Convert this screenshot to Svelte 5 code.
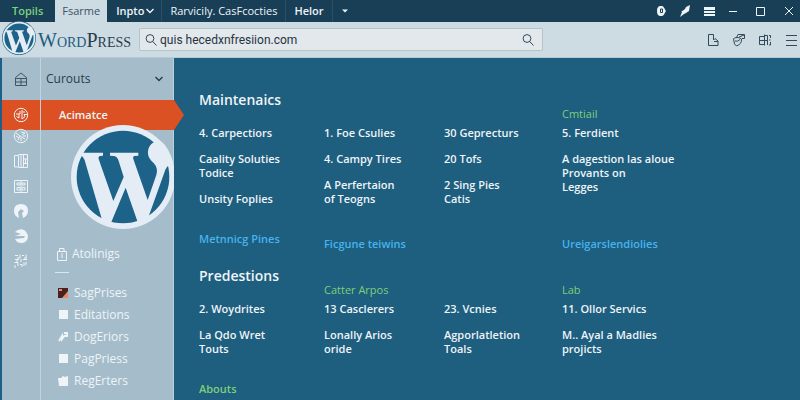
<script lang="ts">
  interface Column {
    label?: string;
    items: string[];
    more?: string;
    tone?: 'blue' | 'green';
  }

  interface Section {
    title: string;
    columns: Column[];
  }

  const sections: Section[] = [
    {
      title: 'Maintenaics',
      columns: [
        {
          items: ['4. Carpectiors', 'Caality Soluties\nTodice', 'Unsity Foplies'],
          more: 'Metnnicg Pines',
        },
        {
          items: ['1. Foe Csulies', '4. Campy Tires', 'A Perfertaion\nof Teogns'],
          more: 'Ficgune teiwins',
        },
        { items: ['30 Geprecturs', '20 Tofs', '2 Sing Pies\nCatis'] },
        {
          label: 'Cmtiail',
          items: ['5. Ferdient', 'A dagestion las aloue\nProvants on\nLegges'],
          more: 'Ureigarslendiolies',
        },
      ],
    },
    {
      title: 'Predestions',
      columns: [
        { items: ['2. Woydrites', 'La Qdo Wret\nTouts'], more: 'Abouts', tone: 'green' },
        { label: 'Catter Arpos', items: ['13 Casclerers', 'Lonally Arios\noride'] },
        { items: ['23. Vcnies', 'Agporlatletion\nToals'] },
        { label: 'Lab', items: ['11. Ollor Servics', 'M.. Ayal a Madlies\nprojicts'] },
      ],
    },
  ];

  const railIcons = ['Dial', 'Book', 'Grid', 'Clock', 'Chart', 'Code'];

  const pages = [
    { name: 'SagPrises', icon: 'flag' },
    { name: 'Editations', icon: 'box' },
    { name: 'DogEriors', icon: 'tool' },
    { name: 'PagPriess', icon: 'box' },
    { name: 'RegErters', icon: 'bag' },
  ];

  let query = $state('quis hecedxnfresiion.com');
</script>

{#snippet chevron()}
  <svg class="chevron" viewBox="0 0 10 10"><path d="M1.5 3 5 6.5 8.500 3" /></svg>
{/snippet}

{#snippet wordmark()}
  <circle class="ring" cx="369" cy="172" r="156" />
  <circle class="disc" cx="369" cy="172" r="139" />
  <path
    class="ring"
    d="M242 99H309V108L300 109Q293 111 297 121L340 244 371 172 356 124Q352 110 342 109L330 108V99H415V108L403 109Q397 111 401 121L443 241 469 166Q475 145 461 130C447 118 443 108 444 95C446 76 460 62 482 64C496 74 512 98 520 132Q504 132 496 150L440 307H413L377 204 334 307H308L254 122Q250 110 242 108Z"
  />
{/snippet}

<div class="app">
  <header>
    <nav class="tabs">
      <a href="#topils" class="tab accent">Topils</a>
      <a href="#fsarme" class="tab active">Fsarme</a>
      <a href="#inpto" class="tab menu">Inpto {@render chevron()}</a>
      <a href="#rarvicily" class="tab wide long">Rarvicily. CasFcocties</a>
      <a href="#help" class="tab wide">Helor</a>
      <button class="tab wide" aria-label="More tabs">
        <svg class="caret" viewBox="0 0 8 8"><path d="M1 2.500H7L4 5.500Z" /></svg>
      </button>
      <div class="status">
        <button aria-label="Notifications">
          <svg viewBox="0 0 14 14">
            <path class="fill" d="M7 2C10 2 10 4 12 7 10 10 10 12 7 12 4 12 3 10 3 7S4 2 7 2Z" />
            <path d="M6.500 5H8.500V8.500H6.500Z" stroke="#193f56" />
          </svg>
        </button>
        <button aria-label="Edit">
          <svg viewBox="0 0 14 14"><path class="fill" d="M12 1 11 7 8 9 6 10 2 13 4 8 3 8 7 5 8 3Z" /></svg>
        </button>
        <button aria-label="List">
          <svg viewBox="0 0 14 14">
            <path class="fill" d="M2 3H13V12H2Z" />
            <path d="M2 6.500H13M2 9.500H13" stroke="#193f56" />
          </svg>
        </button>
        <button aria-label="Minimize"><svg viewBox="0 0 14 14"><path d="M3 7.500H11" /></svg></button>
      </div>
      <div class="window">
        <button aria-label="Maximize"><svg viewBox="0 0 14 14"><path d="M3.500 3.500H11.500V11.500H3.500Z" /></svg></button>
        <button aria-label="Close"><svg viewBox="0 0 14 14"><path d="M3 3 11 11M11 3 3 11" /></svg></button>
      </div>
    </nav>

    <div class="toolbar">
      <a class="brand" href="#home">
        <svg class="brand-logo" viewBox="207 10 324 324">
          <circle class="rim" cx="369" cy="172" r="162" />
          {@render wordmark()}
        </svg>
        <span class="brand-name"><span class="word">Word</span>Press</span>
      </a>
      <form class="search" onsubmit={(e) => e.preventDefault()}>
        <svg viewBox="0 0 14 14"><circle cx="6" cy="5.500" r="3.900" /><path d="M8.700 8.500 12.500 12.500" /></svg>
        <input type="text" aria-label="Search" bind:value={query} />
        <button aria-label="Search">
          <svg viewBox="0 0 14 14"><circle cx="6" cy="5.500" r="3.900" /><path d="M8.700 8.500 12.500 12.500" /></svg>
        </button>
      </form>
      <div class="tools">
        <button aria-label="New page">
          <svg viewBox="0 0 14 14"><path d="M2.500 1.500H7.500V7L9 5.500 12 8V12.500H2.500ZM8 8.500H12" /></svg>
        </button>
        <button aria-label="Theme">
          <svg viewBox="0 0 14 14"><path d="M4.500 4.500 6 1.500H12.500V5.500H10M7 4 12 2M1.500 6Q2 4.500 5 4.500T9.500 6Q10 11 4.500 13 2 12.500 1.500 6ZM3 8Q6 9 8 6.500" /></svg>
        </button>
        <button aria-label="Layout">
          <svg viewBox="0 0 14 14"><path d="M1.500 3.500H6.500V11.500H1.500ZM1.500 7.500H9M6.500 1.500V12.500M6.500 2.500H9.500V12M11 2.500H12.500V5M11 7H12.500M12.500 9V12H11" /></svg>
        </button>
        <button aria-label="Menu"><svg viewBox="0 0 14 14"><path d="M2 2.500H13M2 7.500H13M2 12.500H13" /></svg></button>
      </div>
    </div>
  </header>

  <div class="body">
    <aside class="sidebar">
      <nav class="rail">
        <a href="#home" class="rail-top" aria-label="Home">
          <svg class="dark" viewBox="0 0 16 16"><path d="M2.500 6.500 8 2 13.500 6.500V14.500H2.500ZM2.500 7.500H13.500M8 7.500V14.500M2.500 11H13.500" /></svg>
        </a>
        <a href="#active" class="rail-active" aria-label="Activity">
          <svg viewBox="0 0 16 16"><circle cx="8" cy="8" r="6.700" /><path d="M3 7H7V4M6 7V11L3.500 9.500M9 3V12L12 9.500 11 7.500H14M9.500 5H12" /></svg>
        </a>
        <div class="rail-list">
          {#each railIcons as icon}
            <a href="#{icon}" aria-label={icon}>
              <svg viewBox="0 0 16 16">
                {#if icon === 'Dial'}
                  <circle cx="8" cy="8" r="6.700" /><path d="M3 5 7 8 5 12M7 8 12 11M8 4 12 5 9 7M3 8 6 10M10 8H13M8 10V13" />
                {:else if icon === 'Book'}
                  <path d="M1.500 2.500H5.500V14H1.500ZM5.500 1.500H14.500V14.500H5.500M8 2V14M10.500 2V14M10 6H14M12.500 6V11M10 10.500H14" />
                {:else if icon === 'Grid'}
                  <path d="M1.500 2.500H14.500V14.500H1.500ZM4 5H7V7H4ZM9 5H12V7H9ZM4 9.500H7V12H4ZM9 9.500H12V12H9ZM8 3V14" />
                {:else if icon === 'Clock'}
                  <path class="fill" d="M6 15Q1 13 1 8 1 1 8 1T15 8Q15 13 10 15L9 10 11 8 8 6 5 9Z" />
                {:else if icon === 'Chart'}
                  <path class="fill" d="M2 4Q6 0 11 2 15 5 15 9 14 15 8 15 4 15 2 11L11 10 12 8 2 8 8 6Z" />
                {:else}
                  <path d="M2 2.500H5M7 1.500V5H4M9 2.500H11M13 1.500V5M2 6.500H6M8 6V9M10 6.500H14M1.500 9.500H5V13M7 11.500H9V14M11 9.500V13M13 9V12M2 12V15M4 7V9M11 5H14" />
                {/if}
              </svg>
            </a>
          {/each}
        </div>
      </nav>

      <div class="panel">
        <button class="dropdown">Curouts {@render chevron()}</button>
        <a href="#active" class="current">Acimatce</a>
        <div class="emblem">
          <svg viewBox="213 16 312 312">{@render wordmark()}</svg>
        </div>
        <a href="#atolinigs" class="group">
          <svg viewBox="0 0 12 14"><path d="M1.500 4.500H10.500V13.500H1.500ZM3.500 4V1.500H8V4M6 6V11" /></svg>
          Atolinigs
        </a>
        <hr />
        <ul class="pages">
          {#each pages as page}
            <li>
              <a href="#{page.name}">
                <svg viewBox="0 0 10 10">
                  {#if page.icon === 'flag'}
                    <path d="M0 0H10V10H0Z" fill="#4a2020" />
                    <path d="M4 10 10 3V10ZM1 1H4V3H1Z" fill="#e58a68" />
                  {:else if page.icon === 'tool'}
                    <path d="M1 9 4 4 4 7 7 3M6 1H9V4H7" stroke="#eef4f8" stroke-width="2" fill="none" />
                  {:else if page.icon === 'bag'}
                    <path d="M0 2H3L5 0 7 1 10 0V10H1Z" />
                  {:else}
                    <path d="M1 0H10V9H1Z" />
                  {/if}
                </svg>
                {page.name}
              </a>
            </li>
          {/each}
        </ul>
      </div>
    </aside>

    <main>
      {#each sections as section}
        <section>
          <div class="row head">
            {#each section.columns as column, i}
              {#if i === 0}
                <h2>{section.title}</h2>
              {:else}
                <h3>{column.label ?? ''}</h3>
              {/if}
            {/each}
          </div>
          <div class="row">
            {#each section.columns as column}
              <ul class="items">
                {#each column.items as item}
                  <li><a href="#item">{item}</a></li>
                {/each}
              </ul>
            {/each}
          </div>
          <div class="row foot">
            {#each section.columns as column}
              <div>
                {#if column.more}
                  <a href="#more" class:green={column.tone === 'green'}>{column.more}</a>
                {/if}
              </div>
            {/each}
          </div>
        </section>
      {/each}
    </main>
  </div>
</div>

<style>
  :global(body) {
    background: #1e5e7e;
  }

  .app {
    display: flex;
    flex-direction: column;
    min-height: 100vh;
    font-family: 'Open Sans', 'Noto Sans', sans-serif;
    font-size: 11px;
    line-height: 14px;
    color: #eef4f8;
  }

  a {
    color: inherit;
    text-decoration: none;
  }

  button {
    padding: 0;
    border: 0;
    background: none;
    color: inherit;
    font: inherit;
    cursor: pointer;
  }

  ul {
    margin: 0;
    padding: 0;
    list-style: none;
  }

  svg {
    display: block;
    flex: none;
    width: 14px;
    height: 14px;
    fill: none;
    stroke: currentColor;
  }

  .fill {
    fill: currentColor;
    stroke: none;
  }

  .chevron {
    width: 10px;
    height: 10px;
    stroke-width: 1.4;
  }

  .tabs {
    display: flex;
    height: 22px;
    background: #193f56;
  }

  .tab {
    display: flex;
    align-items: center;
    font-weight: 600;
    white-space: nowrap;
  }

  .tab.accent {
    padding: 0 12px;
    color: #79d47c;
  }

  .tab.active {
    padding: 0 7px;
    background: #cddbe3;
    color: #3d5262;
    font-weight: 400;
  }

  .tab.menu {
    gap: 1px;
    padding: 0 6px 0 9px;
  }

  .tab.wide {
    padding: 0 8px;
    border-left: 1px solid #28506a;
  }

  .tab.long {
    font-weight: 400;
  }

  .caret {
    width: 8px;
    height: 8px;
    fill: currentColor;
    stroke: none;
  }

  .status,
  .window {
    display: flex;
    align-items: center;
  }

  .status {
    gap: 10px;
    margin-left: auto;
    padding-right: 13px;
  }

  .window {
    gap: 15px;
    padding-right: 4px;
  }

  .toolbar {
    display: flex;
    align-items: center;
    height: 36px;
    box-sizing: border-box;
    padding: 0 2px;
    border-bottom: 1px solid #b5cad6;
    background: #cddbe3;
    color: #34495a;
  }

  .brand {
    display: flex;
    align-items: center;
    gap: 2px;
  }

  .brand-logo {
    width: 34px;
    height: 34px;
    margin-top: -4px;
  }

  .ring {
    fill: #e4edf5;
    stroke: none;
  }

  .disc,
  .rim {
    fill: #1d6288;
    stroke: none;
  }

  .brand-name {
    font-family: 'Liberation Serif', serif;
    font-size: 20px;
    line-height: 24px;
    font-variant: small-caps;
    color: #2b3c4c;
  }

  .word {
    color: #1d5c80;
  }

  .search {
    display: flex;
    flex: 1;
    align-items: center;
    gap: 2px;
    height: 23px;
    box-sizing: border-box;
    margin: 0 163px 0 8px;
    padding: 0 7px 0 4px;
    border: 1px solid #b4c3cc;
    border-radius: 2px;
    background: #e2e8ec;
  }

  .search input {
    flex: 1;
    min-width: 0;
    padding: 0;
    border: 0;
    outline: 0;
    background: none;
    color: #26343f;
    font-family: Roboto, sans-serif;
    font-size: 12px;
  }

  .tools {
    display: flex;
    gap: 12px;
  }

  .body {
    display: flex;
    flex: 1;
  }

  .sidebar {
    display: flex;
    flex: none;
    border-left: 2px solid #1e5e8a;
    background: #a5bdca;
  }

  .rail {
    width: 38px;
    border-right: 1px solid #c3d3dc;
  }

  .rail svg {
    width: 16px;
    height: 16px;
  }

  .rail svg.dark {
    color: #3f5666;
  }

  .rail-top,
  .rail-active {
    display: grid;
    place-items: center;
    height: 42px;
  }

  .rail-active {
    height: 30px;
    background: #db5123;
  }

  .rail-list {
    display: grid;
    justify-items: center;
    gap: 9px;
    margin-top: -2px;
  }

  .panel {
    width: 132px;
    border-right: 1px solid #bccfda;
  }

  .dropdown {
    display: flex;
    align-items: center;
    justify-content: space-between;
    width: 100%;
    height: 42px;
    padding: 0 9px 0 5px;
    color: #263d4e;
    font-size: 12px;
  }

  .current {
    position: relative;
    display: flex;
    align-items: center;
    height: 30px;
    margin-right: -1px;
    padding-left: 18px;
    background: #db5123;
    font-weight: 600;
  }

  .current::after {
    content: '';
    position: absolute;
    left: 100%;
    top: 0;
    border: solid transparent;
    border-width: 15px 0 15px 10px;
    border-left-color: #db5123;
  }

  .emblem {
    position: relative;
    overflow: hidden;
    margin: -5px -1px 0 0;
    padding-left: 30px;
  }

  .emblem svg {
    width: 104px;
    height: 104px;
  }

  .group {
    display: flex;
    align-items: center;
    gap: 4px;
    margin-top: 18px;
    padding-left: 15px;
    font-size: 12px;
  }

  .group svg {
    width: 12px;
  }

  hr {
    width: 14px;
    margin: 11px 0 9px 14px;
    border: 0;
    border-top: 1px solid #dce7ed;
  }

  .pages a {
    display: flex;
    align-items: center;
    gap: 6px;
    height: 22px;
    padding-left: 17px;
    font-size: 12px;
  }

  .pages svg {
    width: 10px;
    height: 10px;
    fill: #eef4f8;
    stroke: none;
  }

  main {
    flex: 1;
    padding: 32px 24px 0 25px;
    background: #1e5e7e;
    font-weight: 600;
  }

  section + section {
    margin-top: 15px;
  }

  .row {
    display: grid;
    grid-template-columns: 125fr 120fr 118fr 214fr;
    margin-right: -26px;
    padding-right: 26px;
  }

  .head {
    height: 36px;
  }

  h2,
  h3 {
    margin: 0;
    font-size: 14px;
    line-height: 20px;
    font-weight: 600;
    white-space: nowrap;
  }

  h3 {
    align-self: end;
    padding-bottom: 5px;
    color: #7cd07a;
    font-size: 11px;
    line-height: 14px;
    font-weight: 500;
  }

  .items {
    display: flex;
    flex-direction: column;
    gap: 12px;
  }

  .items li {
    white-space: pre-line;
  }

  .foot {
    margin-top: 26px;
    color: #45b4ee;
  }

  .foot div + div {
    padding-top: 5px;
  }

  .foot .green {
    color: #7cd07a;
  }
</style>
